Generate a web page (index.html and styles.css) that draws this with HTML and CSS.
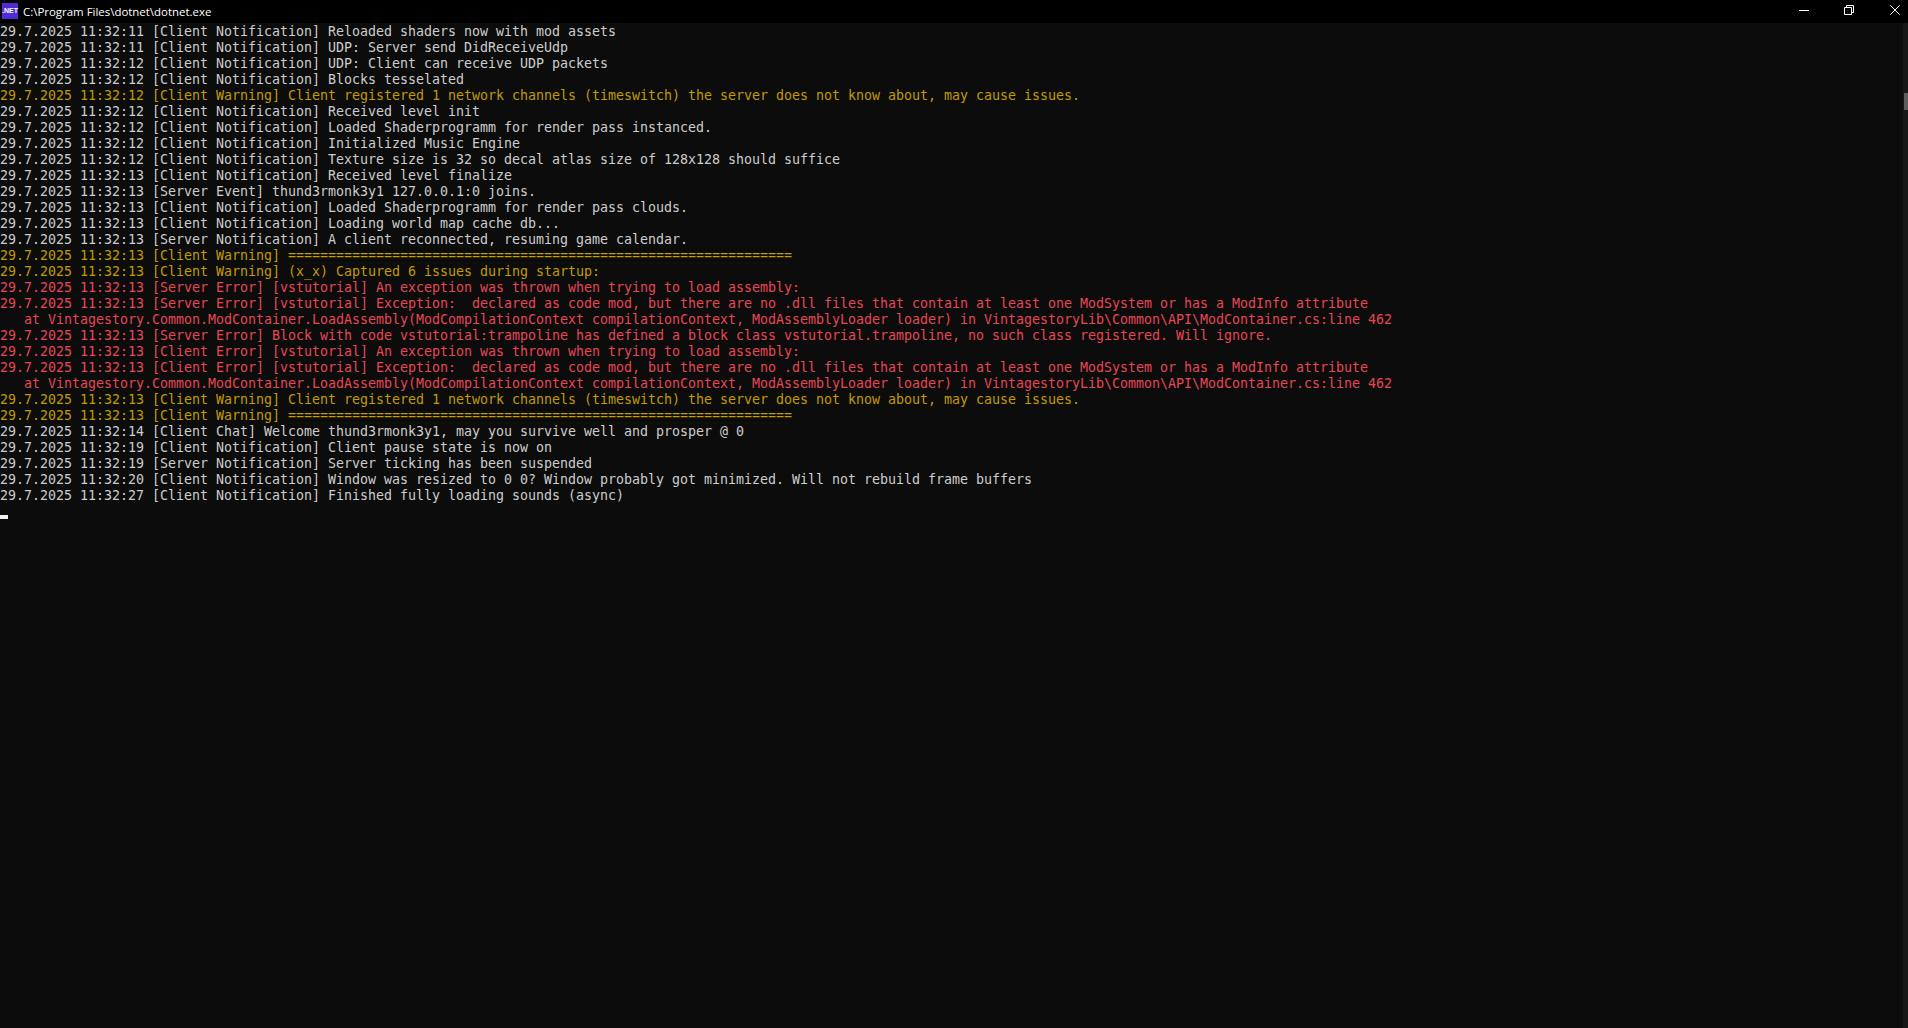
FILE: index.html
```html
<!DOCTYPE html>
<html lang="en">
<head>
<meta charset="utf-8">
<title>C:\Program Files\dotnet\dotnet.exe</title>
<link rel="stylesheet" href="styles.css">
</head>
<body>
<div class="window">
  <header class="titlebar">
    <span class="appicon">.NET</span>
    <span class="title">C:\Program Files\dotnet\dotnet.exe</span>
    <div class="controls">
      <span class="ctl"><svg width="10" height="10" viewBox="0 0 10 10"><path d="M0 5.5h10" stroke="#fff" fill="none"/></svg></span>
      <span class="ctl ctl-restore"><svg width="10" height="10" viewBox="0 0 10 10"><path d="M.5 2.5h7v7h-7zM2.5 2.5V.5h7v7h-2" stroke="#fff" fill="none"/></svg></span>
      <span class="ctl"><svg width="10" height="10" viewBox="0 0 10 10"><path d="M.3.3l9.4 9.4M9.7.3L.3 9.7" stroke="#fff" fill="none"/></svg></span>
    </div>
  </header>
  <div class="body">
    <main class="console">
<div class="ln">29.7.2025 11:32:11 [Client Notification] Reloaded shaders now with mod assets</div>
<div class="ln">29.7.2025 11:32:11 [Client Notification] UDP: Server send DidReceiveUdp</div>
<div class="ln">29.7.2025 11:32:12 [Client Notification] UDP: Client can receive UDP packets</div>
<div class="ln">29.7.2025 11:32:12 [Client Notification] Blocks tesselated</div>
<div class="ln warn">29.7.2025 11:32:12 [Client Warning] Client registered 1 network channels (timeswitch) the server does not know about, may cause issues.</div>
<div class="ln">29.7.2025 11:32:12 [Client Notification] Received level init</div>
<div class="ln">29.7.2025 11:32:12 [Client Notification] Loaded Shaderprogramm for render pass instanced.</div>
<div class="ln">29.7.2025 11:32:12 [Client Notification] Initialized Music Engine</div>
<div class="ln">29.7.2025 11:32:12 [Client Notification] Texture size is 32 so decal atlas size of 128x128 should suffice</div>
<div class="ln">29.7.2025 11:32:13 [Client Notification] Received level finalize</div>
<div class="ln">29.7.2025 11:32:13 [Server Event] thund3rmonk3y1 127.0.0.1:0 joins.</div>
<div class="ln">29.7.2025 11:32:13 [Client Notification] Loaded Shaderprogramm for render pass clouds.</div>
<div class="ln">29.7.2025 11:32:13 [Client Notification] Loading world map cache db...</div>
<div class="ln">29.7.2025 11:32:13 [Server Notification] A client reconnected, resuming game calendar.</div>
<div class="ln warn">29.7.2025 11:32:13 [Client Warning] ===============================================================</div>
<div class="ln warn">29.7.2025 11:32:13 [Client Warning] (x_x) Captured 6 issues during startup:</div>
<div class="ln err">29.7.2025 11:32:13 [Server Error] [vstutorial] An exception was thrown when trying to load assembly:</div>
<div class="ln err">29.7.2025 11:32:13 [Server Error] [vstutorial] Exception:  declared as code mod, but there are no .dll files that contain at least one ModSystem or has a ModInfo attribute</div>
<div class="ln err">   at Vintagestory.Common.ModContainer.LoadAssembly(ModCompilationContext compilationContext, ModAssemblyLoader loader) in VintagestoryLib\Common\API\ModContainer.cs:line 462</div>
<div class="ln err">29.7.2025 11:32:13 [Server Error] Block with code vstutorial:trampoline has defined a block class vstutorial.trampoline, no such class registered. Will ignore.</div>
<div class="ln err">29.7.2025 11:32:13 [Client Error] [vstutorial] An exception was thrown when trying to load assembly:</div>
<div class="ln err">29.7.2025 11:32:13 [Client Error] [vstutorial] Exception:  declared as code mod, but there are no .dll files that contain at least one ModSystem or has a ModInfo attribute</div>
<div class="ln err">   at Vintagestory.Common.ModContainer.LoadAssembly(ModCompilationContext compilationContext, ModAssemblyLoader loader) in VintagestoryLib\Common\API\ModContainer.cs:line 462</div>
<div class="ln warn">29.7.2025 11:32:13 [Client Warning] Client registered 1 network channels (timeswitch) the server does not know about, may cause issues.</div>
<div class="ln warn">29.7.2025 11:32:13 [Client Warning] ===============================================================</div>
<div class="ln">29.7.2025 11:32:14 [Client Chat] Welcome thund3rmonk3y1, may you survive well and prosper @ 0</div>
<div class="ln">29.7.2025 11:32:19 [Client Notification] Client pause state is now on</div>
<div class="ln">29.7.2025 11:32:19 [Server Notification] Server ticking has been suspended</div>
<div class="ln">29.7.2025 11:32:20 [Client Notification] Window was resized to 0 0? Window probably got minimized. Will not rebuild frame buffers</div>
<div class="ln">29.7.2025 11:32:27 [Client Notification] Finished fully loading sounds (async)</div>
<div class="ln cursorline"><span class="cursor"></span></div>
    </main>
    <aside class="scrolltrack"><div class="thumb"></div></aside>
  </div>
</div>
</body>
</html>
```
FILE: styles.css
```css
* { box-sizing: border-box; }
html, body { margin: 0; height: 100%; background: #0c0c0c; overflow: hidden; }
.window { display: flex; flex-direction: column; height: 100%; }
.titlebar { display: flex; align-items: flex-start; height: 23px; background: #000; flex: none; }
.appicon { width: 16px; height: 16px; margin: 3px 0 0 2px; background: #512bd4; color: #fff; font: 700 7px/16px "Liberation Sans", sans-serif; text-align: center; flex: none; }
.title { margin-left: 5px; color: #fff; font: 11.45px/23px "Open Sans", "Liberation Sans", sans-serif; white-space: nowrap; }
.controls { margin-left: auto; display: flex; padding: 5px 8px 0 0; }
.ctl { display: flex; width: 10px; height: 10px; margin-left: 36px; }
.ctl-restore { margin-left: 35px; }
.body { display: flex; flex: 1; min-height: 0; }
.console { flex: 1; padding-top: 1px; color: #ccc; font: 13.3px/16px "DejaVu Sans Mono", monospace; }
.ln { height: 16px; white-space: pre; letter-spacing: -0.005px; }
.warn { color: #c19c00; }
.err { color: #e74856; }
.cursorline { display: flex; align-items: flex-end; }
.cursor { width: 8px; height: 4px; margin-bottom: 1px; background: #f2f2f2; }
.scrolltrack { width: 5px; background: #171717; padding-top: 70px; flex: none; }
.thumb { width: 4px; height: 17px; margin-left: 1px; background: #5d5d5d; }
```
